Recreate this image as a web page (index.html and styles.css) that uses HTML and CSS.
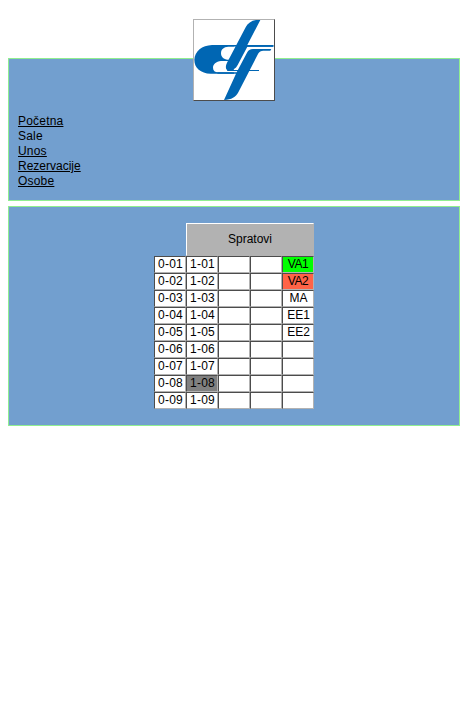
FILE: index.html
```
<!DOCTYPE html>
<html lang="sr">
<head>
<meta charset="utf-8">
<title>Sale</title>
<link rel="stylesheet" href="styles.css">
</head>
<body>
<header class="panel top">
  <svg class="logo" viewBox="30 30 240 240" role="img" aria-label="Logo">
    <path class="mark" d="M84 105H268V110H150V191H80C50 190 31 174 31 149C32 124 54 106 84 105Z"/>
    <path class="paper" d="M160 110H133C119 111 111 118 111 129C111 141 119 148 131 149H142Z"/>
    <path class="paper" d="M140 153H111C96 155 87 163 87 173C87 182 93 187 102 187H162V182H130Z"/>
    <path class="paper" d="M185 111H207L160 187H145Z"/>
    <path class="mark" d="M229 30H216C202 32 191 40 185 52L129 158C123 171 125 181 134 182C147 181 155 176 161 165L190 110H268V105H190Z"/>
    <path class="mark" d="M262 117H207C198 117 193 121 189 128L158 187H100V191H156L143 220L120 270C143 269 155 262 163 247L222 132C226 124 231 122 238 122H259Z"/>
    <path class="mark" d="M130 180H225V183H130Z"/>
  </svg>
  <nav class="menu">
    <a class="wide" href="#">Početna</a>
    <span class="wide">Sale</span>
    <a class="wide" href="#">Unos</a>
    <a href="#">Rezervacije</a>
    <a class="wide" href="#">Osobe</a>
  </nav>
</header>
<main class="panel rooms">
  <div class="grid">
    <div class="head">Spratovi</div>
    <div>0-01</div><div>1-01</div><div></div><div></div><div class="free">VA1</div>
    <div>0-02</div><div>1-02</div><div></div><div></div><div class="busy">VA2</div>
    <div>0-03</div><div>1-03</div><div></div><div></div><div class="name">MA</div>
    <div>0-04</div><div>1-04</div><div></div><div></div><div class="name">EE1</div>
    <div>0-05</div><div>1-05</div><div></div><div></div><div class="name">EE2</div>
    <div>0-06</div><div>1-06</div><div></div><div></div><div></div>
    <div>0-07</div><div>1-07</div><div></div><div></div><div></div>
    <div>0-08</div><div class="closed">1-08</div><div></div><div></div><div></div>
    <div>0-09</div><div>1-09</div><div></div><div></div><div></div>
  </div>
</main>
</body>
</html>
```
FILE: styles.css
```
* { box-sizing: border-box; }
body {
  margin: 0;
  padding: 58px 8px 0;
  background: #fff;
  color: #000;
  font: 12px/15px "Liberation Sans", Arial, sans-serif;
}
.panel {
  background: #729fcf;
  border: 1px solid #90ee90;
}
.top {
  position: relative;
  height: 143px;
  padding: 55px 9px 0;
}
.logo {
  position: absolute;
  top: -40px;
  left: 184px;
  width: 82px;
  height: 82px;
  background: #fff;
  border: 1px solid;
  border-color: #b2b2b2 #4c4c4c #4c4c4c #b2b2b2;
}
.mark { fill: #0066b3; }
.paper { fill: #fff; }
.menu {
  display: flex;
  flex-direction: column;
  align-items: flex-start;
}
.menu a { color: #000; }
.wide { letter-spacing: 0.2px; }
.rooms {
  height: 220px;
  margin-top: 5px;
  padding-top: 16px;
}
.grid {
  display: grid;
  grid-template-columns: repeat(5, 32px);
  grid-template-rows: 33px repeat(9, 17px);
  justify-content: center;
  text-align: center;
}
.grid div {
  background: #fff;
  border: 1px solid;
  border-color: #4c4c4c #b2b2b2 #b2b2b2 #4c4c4c;
  padding-left: 1px;
  letter-spacing: 0.25px;
}
.grid .head {
  grid-column: 2 / 6;
  background: #b2b2b2;
  border-color: #fff #b2b2b2 #b2b2b2 #fff;
  padding-left: 0;
  letter-spacing: 0;
  line-height: 31px;
}
.grid .name { letter-spacing: 0; }
.grid .free,
.grid .busy {
  padding-left: 0;
  letter-spacing: -0.5px;
}
.grid .free { background: #0f0; }
.grid .busy { background: #ff6347; }
.grid .closed { background: #808080; }
```
